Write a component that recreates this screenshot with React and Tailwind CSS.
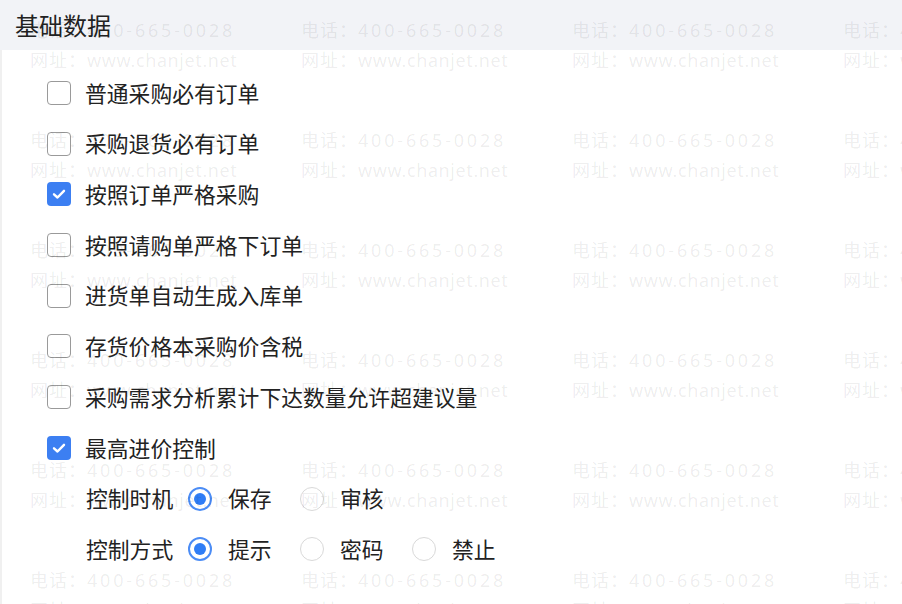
import React from "react";

const items = [
  { label: "普通采购必有订单", checked: false },
  { label: "采购退货必有订单", checked: false },
  { label: "按照订单严格采购", checked: true },
  { label: "按照请购单严格下订单", checked: false },
  { label: "进货单自动生成入库单", checked: false },
  { label: "存货价格本采购价含税", checked: false },
  { label: "采购需求分析累计下达数量允许超建议量", checked: false },
  { label: "最高进价控制", checked: true },
];

function Checkbox({ checked }) {
  if (checked) {
    return (
      <div className="w-[24px] h-[24px] rounded-[4px] bg-[#3c7ff2] flex items-center justify-center shrink-0">
        <svg width="16" height="16" viewBox="0 0 16 16" fill="none">
          <path d="M3 8.3 L6.5 11.5 L13 4.8" stroke="white" strokeWidth="2.4" strokeLinecap="round" strokeLinejoin="round" />
        </svg>
      </div>
    );
  }
  return <div className="w-[24px] h-[24px] rounded-[4px] border-[1.5px] border-[#9a9a9a] bg-white shrink-0" />;
}

function Radio({ checked }) {
  if (checked) {
    return (
      <div className="w-[24px] h-[24px] rounded-full border-[2px] border-[#4b8cf5] flex items-center justify-center shrink-0">
        <div className="w-[12px] h-[12px] rounded-full bg-[#2f7df6]" />
      </div>
    );
  }
  return <div className="w-[24px] h-[24px] rounded-full border-[1.5px] border-[#d9d9d9] bg-white shrink-0" />;
}

function RadioRow({ title, options, selected }) {
  return (
    <div className="h-[50.7px] flex items-center pl-[84px]">
      <span className="w-[102px]">{title}</span>
      {options.map((o, i) => (
        <div key={o} className="w-[112px] flex items-center gap-[16px]">
          <Radio checked={i === selected} />
          <span>{o}</span>
        </div>
      ))}
    </div>
  );
}

function Watermark() {
  const tiles = [];
  for (let r = 0; r < 6; r++) {
    for (let c = 0; c < 4; c++) {
      tiles.push(
        <div key={r + "-" + c} className="h-[110px] flex flex-col leading-[30px] whitespace-nowrap">
          <span>
            <span className="tracking-[1px]">电话：</span>
            <span className="tracking-[2.8px]">400-665-0028</span>
          </span>
          <span>
            <span className="tracking-[1px]">网址：</span>
            <span className="tracking-[0.6px]">www.chanjet.net</span>
          </span>
        </div>
      );
    }
  }
  return (
    <div className="absolute inset-0 overflow-hidden pointer-events-none z-10">
      <div
        className="grid grid-cols-[repeat(4,271px)] pl-[30px] pt-[15px] text-[18px] text-[rgba(0,0,0,0.08)]"
        style={{ fontFamily: '"Noto Sans", "Noto Sans CJK SC", sans-serif' }}
      >
        {tiles}
      </div>
    </div>
  );
}

export default function App() {
  return (
    <div
      className="relative w-[902px] h-[604px] overflow-hidden bg-white text-[#222]"
      style={{ fontFamily: '"Noto Sans CJK SC", "Noto Sans", sans-serif' }}
    >
      <div className="h-[50px] bg-[#f2f3f7] flex items-center pl-[15px] text-[24px] text-[#222]">基础数据</div>
      <div className="border-l-[2px] border-[#f0f0f0] h-[554px] pt-[17.7px] text-[21.8px]">
        {items.map((it) => (
          <div key={it.label} className="h-[50.7px] flex items-center pl-[45px] gap-[14px]">
            <Checkbox checked={it.checked} />
            <span>{it.label}</span>
          </div>
        ))}
        <RadioRow title="控制时机" options={["保存", "审核"]} selected={0} />
        <RadioRow title="控制方式" options={["提示", "密码", "禁止"]} selected={0} />
      </div>
      <Watermark />
    </div>
  );
}
